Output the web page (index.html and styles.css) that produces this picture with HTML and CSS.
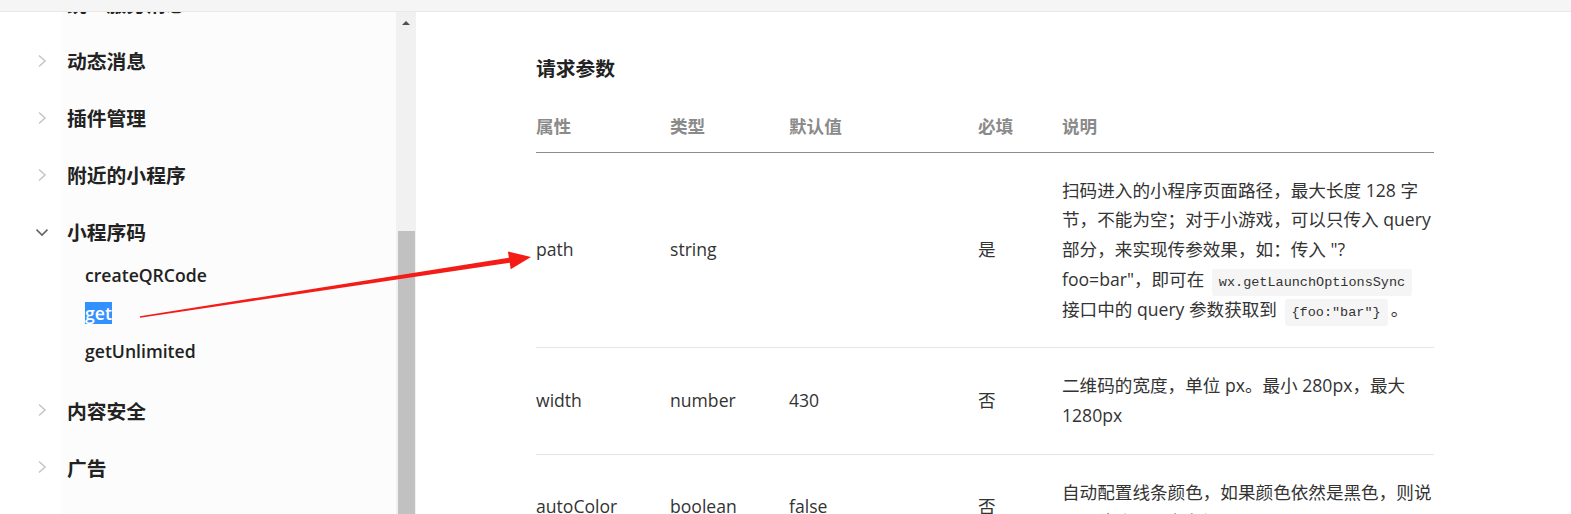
FILE: index.html
```html
<!DOCTYPE html>
<html lang="zh-CN">
<head>
	<meta charset="UTF-8">
	<title>小程序码 - get</title>
	<link rel="stylesheet" href="styles.css">
</head>
<body>
<div class="topbar"></div>
<div class="layout">
	<div class="sidebar">
		<ul class="nav">
			<li class="nav-item">
				<div class="nav-label"><svg class="chev" width="12" height="14" viewBox="0 0 12 14"><polyline points="3,1.5 9,7 3,12.5"/></svg>统一服务消息</div>
			</li>
			<li class="nav-item">
				<div class="nav-label"><svg class="chev" width="12" height="14" viewBox="0 0 12 14"><polyline points="3,1.5 9,7 3,12.5"/></svg>动态消息</div>
			</li>
			<li class="nav-item">
				<div class="nav-label"><svg class="chev" width="12" height="14" viewBox="0 0 12 14"><polyline points="3,1.5 9,7 3,12.5"/></svg>插件管理</div>
			</li>
			<li class="nav-item">
				<div class="nav-label"><svg class="chev" width="12" height="14" viewBox="0 0 12 14"><polyline points="3,1.5 9,7 3,12.5"/></svg>附近的小程序</div>
			</li>
			<li class="nav-item open">
				<div class="nav-label"><svg class="chev" width="12" height="14" viewBox="0 0 12 14"><polyline points="0.5,4.5 6,10 11.5,4.5"/></svg>小程序码</div>
				<ul class="sub-nav">
					<li>createQRCode</li>
					<li><span class="picked">get</span></li>
					<li>getUnlimited</li>
				</ul>
			</li>
			<li class="nav-item">
				<div class="nav-label"><svg class="chev" width="12" height="14" viewBox="0 0 12 14"><polyline points="3,1.5 9,7 3,12.5"/></svg>内容安全</div>
			</li>
			<li class="nav-item">
				<div class="nav-label"><svg class="chev" width="12" height="14" viewBox="0 0 12 14"><polyline points="3,1.5 9,7 3,12.5"/></svg>广告</div>
			</li>
		</ul>
	</div>
	<div class="scrollbar">
		<div class="scroll-up"></div>
		<div class="scroll-thumb"></div>
	</div>
	<div class="main">
		<h3 class="section-title">请求参数</h3>
		<table class="params">
			<colgroup>
				<col class="c-name">
				<col class="c-type">
				<col class="c-default">
				<col class="c-required">
				<col class="c-desc">
			</colgroup>
			<thead>
				<tr>
					<th>属性</th>
					<th>类型</th>
					<th>默认值</th>
					<th>必填</th>
					<th>说明</th>
				</tr>
			</thead>
			<tbody>
				<tr>
					<td>path</td>
					<td>string</td>
					<td></td>
					<td>是</td>
					<td>扫码进入的小程序页面路径，最大长度 128 字节，不能为空；对于小游戏，可以只传入 query 部分，来实现传参效果，如：传入 "?foo=bar"，即可在 <code>wx.getLaunchOptionsSync</code> 接口中的 query 参数获取到 <code>{foo:"bar"}</code>。</td>
				</tr>
				<tr>
					<td>width</td>
					<td>number</td>
					<td>430</td>
					<td>否</td>
					<td>二维码的宽度，单位 px。最小 280px，最大 1280px</td>
				</tr>
				<tr>
					<td>autoColor</td>
					<td>boolean</td>
					<td>false</td>
					<td>否</td>
					<td>自动配置线条颜色，如果颜色依然是黑色，则说明不建议配置主色调</td>
				</tr>
			</tbody>
		</table>
	</div>
</div>
<!-- 标注用的红色箭头 -->
<svg class="mark" width="1571" height="514" viewBox="0 0 1571 514">
	<polygon fill="#f41c16" points="139.9,316.2 508.9,257.8 507.9,251.4 531,257 510.7,269.2 509.7,262.8 140.1,317.8"/>
</svg>
</body>
</html>
```
FILE: styles.css
```css
html, body{
	margin: 0;
	height: 100%;
	overflow: hidden;
}
body{
	position: relative;
	font-family: "Open Sans", "Noto Sans CJK SC", sans-serif;
	color: #333;
	background: #fff;
}
.topbar{
	height: 11px;
	background-color: #f5f5f5;
	border-bottom: 1px solid #e8e8e8;
	position: relative;
	z-index: 1;
}
.layout{
	display: flex;
	height: 502px;
}

/* 左侧菜单 */
.sidebar{
	width: 396px;
	overflow: hidden;
	background: linear-gradient(to right, #fff 62px, #fcfcfc 62px);
}
.nav{
	list-style: none;
	margin: -37px 0 0;
	padding: 0;
}
.nav-label{
	display: flex;
	align-items: center;
	height: 57px;
	font-size: 19.8px;
	font-weight: 700;
	color: #222;
}
.chev{
	flex: none;
	margin: 0 19px 0 36px;
	fill: none;
	stroke: #c6c6c6;
	stroke-width: 1.6;
}
.open .chev{
	stroke: #666;
}
.sub-nav{
	list-style: none;
	margin: -4px 0 11.5px;
	padding: 0 0 0 85px;
}
.sub-nav li{
	height: 38px;
	line-height: 38px;
	font-size: 17.6px;
	font-weight: 600;
	color: #222;
}
.picked{
	display: inline-block;
	line-height: 22px;
	background-color: #3390ff;
	color: #fff;
}

/* 스크롤바 */
.scrollbar{
	width: 20px;
	background-color: #f1f1f1;
	display: flex;
	flex-direction: column;
}
.scroll-up{
	height: 21px;
	display: flex;
	justify-content: center;
	align-items: center;
}
.scroll-up::before{
	content: "";
	border-left: 4px solid transparent;
	border-right: 4px solid transparent;
	border-bottom: 4px solid #505050;
}
.scroll-thumb{
	margin: 198px 0 0 2px;
	width: 17px;
	flex: 1;
	background-color: #c1c1c1;
}

/* 본문 */
.main{
	flex: 1;
	padding: 42px 0 0 120px;
}
.section-title{
	margin: 0 0 18px;
	font-size: 19.8px;
	line-height: 30px;
	font-weight: 700;
	color: #222;
}
.params{
	width: 898px;
	table-layout: fixed;
	border-collapse: collapse;
	font-size: 17.6px;
	line-height: 29.7px;
}
.c-name{ width: 134px; }
.c-type{ width: 119px; }
.c-default{ width: 189px; }
.c-required{ width: 84px; }
.c-desc{ width: 372px; }
.params th{
	text-align: left;
	padding: 10px 0;
	font-weight: 700;
	color: #8a8a8a;
	border-bottom: 1px solid #8c8c8c;
}
.params td{
	padding: 23px 0;
	vertical-align: middle;
	border-bottom: 1px solid #e5e5e5;
	word-wrap: break-word;
}
.params td:last-child{
	padding-right: 2px;
}
.params code{
	font-family: "Liberation Mono", monospace;
	font-size: 13.5px;
	line-height: 1;
	background-color: #f5f5f5;
	padding: 6px 7px;
	margin: 0 3px;
	border-radius: 3px;
}

.mark{
	position: absolute;
	left: 0;
	top: 0;
	pointer-events: none;
	z-index: 2;
}
```
